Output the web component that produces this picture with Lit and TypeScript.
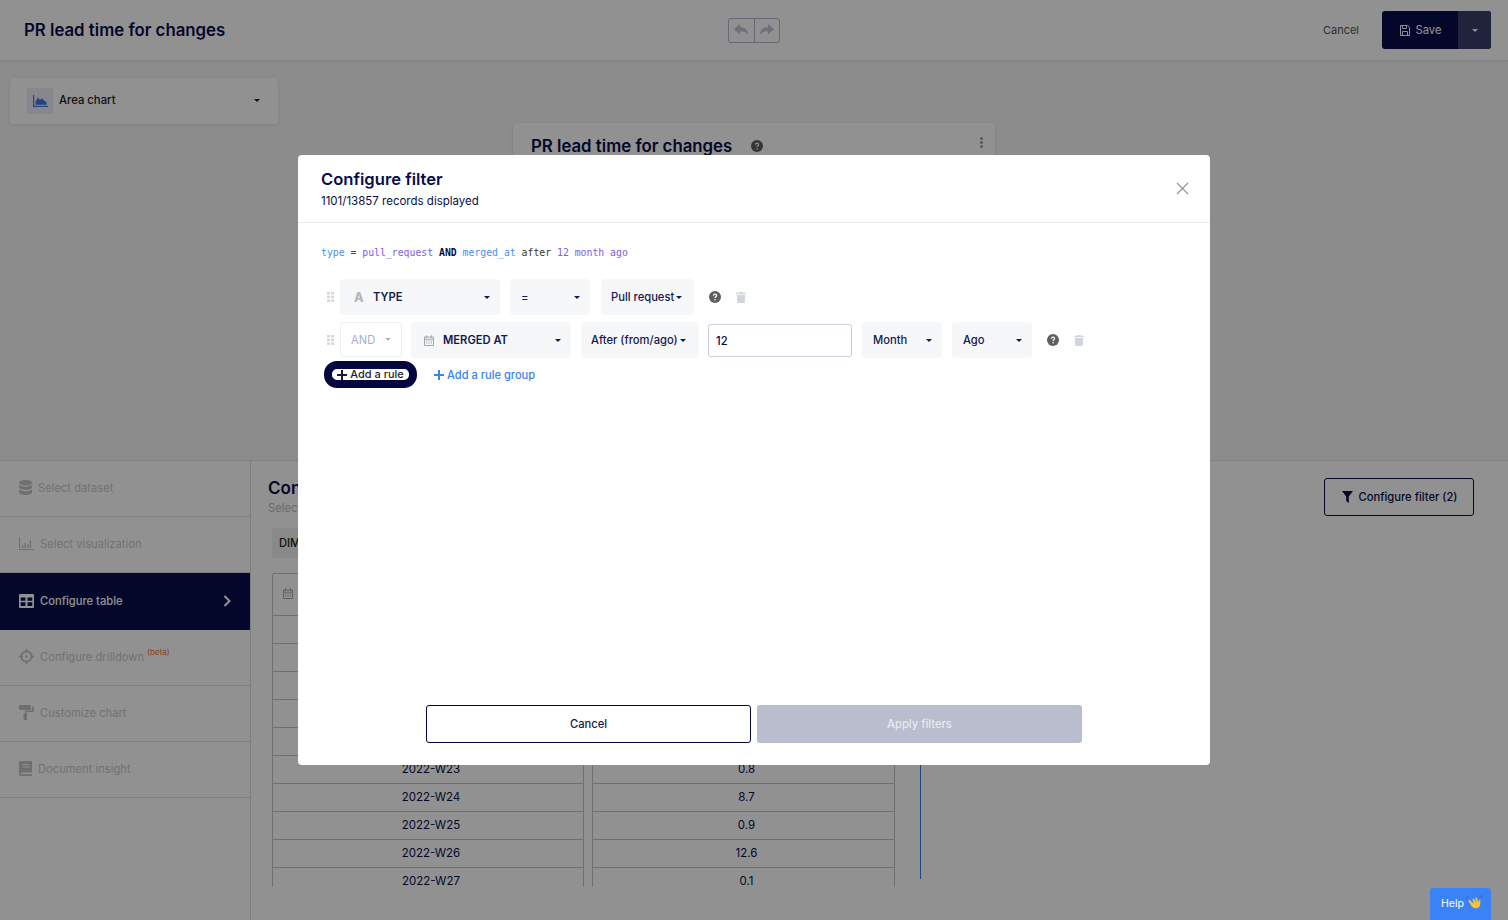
import { LitElement, html, css, svg } from "lit";
import { customElement } from "lit/decorators.js";

const caret = html`<i class="caret"></i>`;
const help = html`<svg class="help" viewBox="0 0 12 12"><circle cx="6" cy="6" r="6" fill="#5f5f5f"/><path d="M4.4 4.6c.1-.9.8-1.4 1.6-1.4.9 0 1.6.6 1.6 1.4 0 1.2-1.5 1.2-1.5 2.3" fill="none" stroke="#fff" stroke-width="1.2"/><circle cx="6.1" cy="8.8" r=".8" fill="#fff"/></svg>`;
const trash = html`<svg class="trash" viewBox="0 0 10 11"><path d="M3.4 0h3.2l.4.8H10v1.1H0V.8h3zM.7 2.7h8.6l-.6 8.3H1.3z" fill="#d1d5de"/></svg>`;
const grip = html`<svg class="grip" viewBox="0 0 7 10"><g fill="#d4d6da"><rect width="3" height="2.4"/><rect x="4" width="3" height="2.4"/><rect y="3.7" width="3" height="2.4"/><rect x="4" y="3.7" width="3" height="2.4"/><rect y="7.4" width="3" height="2.4"/><rect x="4" y="7.4" width="3" height="2.4"/></g></svg>`;
const cal = (c: string) => html`<svg class="cal" viewBox="0 0 10 11"><path d="M.5 2h9v8.500h-9zM.5 4.200h9" fill="none" stroke="${c}" stroke-width="1"/><path d="M2.500.3v2.500M7.500.3v2.500" stroke="${c}" stroke-width="1"/><path d="M2 5.600h1.200v1H2zM4.400 5.600h1.200v1H4.400zM6.800 5.600H8v1H6.800zM2 7.600h1.200v1H2zM4.400 7.600h1.200v1H4.400zM6.800 7.600H8v1H6.800z" fill="${c}"/></svg>`;

const icons: Record<string, { vb: string; body: unknown }> = {
  db: { vb: "0 0 14 14", body: svg`<path d="M7 0c3.900 0 7 1.100 7 2.500S10.900 5 7 5 0 3.900 0 2.500 3.100 0 7 0zM0 4.300C1.200 5.600 4 6.300 7 6.300s5.800-.7 7-2v2.500C14 8.100 10.900 9.300 7 9.300S0 8.100 0 6.800zM0 8.600c1.200 1.300 4 2 7 2s5.800-.7 7-2v2.900C14 12.900 10.900 14 7 14s-7-1.100-7-2.500z"/>` },
  bars: { vb: "0 0 15 15", body: svg`<path d="M0 1h1v12h14v1H0zM3 9h1.300v3H3zM5.600 7h1.300v5H5.600zM8.200 8.500h1.300V12H8.200zM10.800 4.500h1.300V12h-1.300z"/>` },
  table: { vb: "0 0 15 14", body: svg`<path fill-rule="evenodd" d="M1 0h13a1 1 0 0 1 1 1v12a1 1 0 0 1-1 1H1a1 1 0 0 1-1-1V1a1 1 0 0 1 1-1zm.7 3.500v3.300h4.800V3.500zm6.800 0v3.300h4.800V3.500zM1.700 8.200v3.800h4.800V8.200zm6.800 0v3.800h4.800V8.200z"/>` },
  target: { vb: "0 0 15 15", body: svg`<circle cx="7.500" cy="7.500" r="5.200" fill="none" stroke="#c4c4c4" stroke-width="1.800"/><circle cx="7.500" cy="7.500" r="1.300"/><path d="M6.700 0h1.600v3.500H6.700zM6.700 11.500h1.600V15H6.700zM0 6.700h3.500v1.600H0zM11.500 6.700H15v1.600h-3.500z"/>` },
  roller: { vb: "0 0 15 15", body: svg`<path d="M1 0h10a1 1 0 0 1 1 1v3a1 1 0 0 1-1 1H1a1 1 0 0 1-1-1V1a1 1 0 0 1 1-1zM13 1.500h.5a1.500 1.500 0 0 1 1.500 1.500v2.500A1.500 1.500 0 0 1 13.500 7H7.500v1.500h.5V14a1 1 0 0 1-1 1H5.500a1 1 0 0 1-1-1V8.500h1.500V6.500a1 1 0 0 1 1-1h6V3H13z"/>` },
  book: { vb: "0 0 13 15", body: svg`<path fill-rule="evenodd" d="M2 0h11v11.500H2.300a1 1 0 0 0 0 1.800H13V15H2a2 2 0 0 1-2-2V2a2 2 0 0 1 2-2zm1.500 3v1h7V3zm0 2.500v1h7v-1z"/>` },
};

const steps = [
  { icon: "db", label: "Select dataset", w: "narrow" },
  { icon: "bars", label: "Select visualization", w: "" },
  { icon: "table", label: "Configure table", w: "", active: true },
  { icon: "target", label: "Configure drilldown", w: "", beta: true },
  { icon: "roller", label: "Customize chart", w: "" },
  { icon: "book", label: "Document insight", w: "narrow" },
];

const rows: [string, string][] = [
  ["2022-W18", "3.2"], ["2022-W19", "1.4"], ["2022-W20", "6.1"], ["2022-W21", "2.3"], ["2022-W22", "4.5"],
  ["2022-W23", "0.8"], ["2022-W24", "8.7"], ["2022-W25", "0.9"], ["2022-W26", "12.6"], ["2022-W27", "0.1"],
];

@customElement("app-root")
export class AppRoot extends LitElement {
  static styles = css`
    :host { display: block; position: relative; width: 1508px; height: 920px; overflow: hidden; font-family: Inter, "Liberation Sans", sans-serif; font-size: 11.200px; color: #070e48; background: #fff; --navy: #070e48; }
    * { box-sizing: border-box; }
    .caret { display: inline-block; width: 0; height: 0; border: 3px solid transparent; border-top: 3.500px solid currentColor; border-bottom: 0; flex: none; }

    .topbar { height: 60px; display: flex; align-items: center; padding: 0 17px 0 24px; background: #fff; box-shadow: 0 1px 3px rgba(0,0,0,.1); position: relative; }
    .topbar h1 { flex: 1 1 0; margin: 0; font-size: 16.800px; font-weight: 600; line-height: 24px; }
    .history { display: flex; margin-right: 543px; border: 1px solid #b5b7d0; border-radius: 3px; height: 25px; }
    .history span { width: 25px; display: flex; align-items: center; justify-content: center; }
    .history span + span { border-left: 1px solid #b5b7d0; }
    .history svg { width: 14px; height: 12px; fill: #c2c4d4; }
    .cancel-top { color: #555; margin-right: 23px; font-size: 11px; }
    .save { display: flex; height: 38px; background: var(--navy); border-radius: 3px; color: #fff; overflow: hidden; }
    .save-main { width: 76px; display: flex; align-items: center; justify-content: center; gap: 6px; padding-left: 1px; }
    .save-main svg { width: 10px; height: 11px; }
    .save-drop { width: 33px; display: flex; align-items: center; justify-content: center; background: #3a3f6a; }

    .stage { height: 400px; background: #f4f7f4; padding: 18px 0 0 10px; display: flex; align-items: flex-start; overflow: hidden; }
    .chart-select { width: 268px; height: 46px; background: #fff; border-radius: 3px; box-shadow: 0 1px 3px rgba(0,0,0,.1); display: flex; align-items: center; padding: 0 18px 2px 17px; font-weight: 500; font-size: 11.300px; color: #1b1b22; }
    .chart-select .thumb { width: 26px; height: 26px; background: #eeeffa; display: flex; align-items: center; justify-content: center; margin: 2px 6px 0 0; }
    .chart-select .thumb svg { width: 15px; height: 12px; fill: #3f78e0; }
    .chart-select span { flex: 1; }
    .chart-card { margin: 45px 0 0 235px; width: 482px; height: 300px; background: #fff; border-radius: 3px; box-shadow: 0 1px 3px rgba(0,0,0,.1); padding: 12px 12px 0 18px; display: flex; align-items: flex-start; }
    .chart-card h2 { margin: 0 19px 0 0; font-size: 16.800px; font-weight: 600; line-height: 22px; }
    .chart-card .help { margin-top: 5px; }
    .chart-card .dots { margin-left: auto; display: grid; gap: 1px; margin-top: 2px; }
    .chart-card .dots i { width: 3px; height: 3px; border-radius: 50%; background: #9a9a9a; }

    .panel { height: 460px; display: flex; background: #fff; border-top: 1px solid #ddd; }
    .side { width: 251px; border-right: 1px solid #ddd; flex: none; }
    .step { height: 56px; display: flex; align-items: center; padding: 0 0 2px 19px; gap: 6px; color: #c9c9c9; font-size: 11.200px; border-bottom: 1px solid #e2e2e2; }
    .step svg { width: 15px; height: 15px; fill: #c4c4c4; flex: none; }
    .step.narrow svg { width: 13px; }
    .step.active { background: var(--navy); color: #fff; font-weight: 500; border-bottom: 0; height: 57px; padding-right: 19px; }
    .step.active svg { fill: #fff; height: 14px; }
    .step.active .chev { margin-left: auto; width: 8px; height: 12px; fill: none; stroke: #fff; stroke-width: 2; }
    .step sup { color: #f0732b; font-size: 8px; margin-left: 3px; line-height: 1; position: relative; top: -2px; vertical-align: top; }
    .main { flex: 1; min-width: 0; padding: 17px 34px 0 17px; display: flex; flex-direction: column; }
    .main-head { display: flex; justify-content: space-between; align-items: flex-start; height: 50px; }
    .main-head h3 { margin: 0; font-size: 17px; font-weight: 600; line-height: 20px; }
    .main-head p { margin: 2px 0 0; font-size: 11.200px; color: #bbb; line-height: 16px; }
    .filter-btn { width: 150px; height: 38px; border: 1px solid var(--navy); border-radius: 3px; display: flex; align-items: center; justify-content: center; gap: 6px; font-weight: 500; font-size: 11.200px; padding: 0 0 1px 1px; }
    .filter-btn svg { width: 11px; height: 12px; fill: var(--navy); }
    .tabs { margin-left: 4px; }
    .tab { display: inline-flex; align-items: center; width: 180px; height: 30px; padding: 0 0 1px 7px; background: #f1f1f1; border-radius: 3px; color: #222; font-weight: 500; font-size: 11.200px; }
    .tablewrap { margin: 15px 0 0 4px; height: 314px; display: flex; overflow: hidden; flex: none; }
    .col { border-left: 1px solid #c6c6c6; border-right: 1px solid #c6c6c6; }
    .col.a { width: 312px; margin-right: 8px; border-radius: 3px 0 0 0; }
    .col.b { width: 303px; }
    .cell { height: 28px; display: flex; align-items: center; justify-content: center; padding: 0 0 2px 6px; border-bottom: 1px solid #c6c6c6; font-size: 11.500px; }
    .cell.head { height: 43px; justify-content: flex-start; padding-left: 10px; border-top: 1px solid #c6c6c6; font-weight: 500; }
    .cell.head .cal { width: 10px; height: 11px; margin-right: 6px; }
    .axis { width: 1px; height: 306px; background: #3f78e0; margin-left: 25px; flex: none; }

    .overlay { position: absolute; inset: 0; background: rgba(0,0,0,.43); display: flex; align-items: center; justify-content: center; }
    .modal { width: 912px; height: 610px; background: #fff; border-radius: 4px; display: flex; flex-direction: column; }
    .m-head { height: 68px; flex: none; border-bottom: 1px solid #e9e9e9; padding: 13px 21px 0 23px; display: flex; justify-content: space-between; align-items: flex-start; }
    .m-head h2 { margin: 0; font-size: 16.600px; font-weight: 600; line-height: 22px; }
    .m-head p { margin: 3px 0 0; font-size: 11.500px; line-height: 16px; }
    .x { width: 13px; height: 13px; margin: 14px 0 0 0; stroke: #9a9a9a; stroke-width: 1.400; fill: none; }
    .m-body { flex: 1; padding: 23px 23px 22px; display: flex; flex-direction: column; min-height: 0; }
    .code { font-family: "DejaVu Sans Mono", monospace; font-size: 9.800px; line-height: 13px; margin-bottom: 20px; white-space: pre; }
    .code .f { color: #4b8df8; } .code .v { color: #7c5ce8; } .code .o { color: #444; } .code .k { font-weight: 700; color: #070e48; } .code .t { color: #333; }
    .rule { display: flex; align-items: center; height: 36px; }
    .rule + .rule { margin-top: 7px; }
    .grip { width: 7px; height: 10px; margin: 0 6px; flex: none; }
    .sel { height: 36px; background: #f6f7f9; border-radius: 4px; display: flex; align-items: center; justify-content: space-between; padding: 0 10px 0 11px; font-size: 11.200px; font-weight: 500; flex: none; color: #14194f; margin-right: 10px; white-space: nowrap; }
    .sel.group { justify-content: flex-start; padding: 0 10px 0 13px; font-weight: 600; }
    .sel.group .cal { width: 10px; height: 11px; margin-right: 9px; flex: none; }
    .sel.group .a-icon { font-size: 12.500px; font-weight: 800; color: #b8b8b8; width: 11px; margin: 0 8px 0 1px; }
    .sel.group .caret { margin-left: auto; }
    .sel.tight { justify-content: flex-start; gap: 2px; padding: 0 0 0 10px; }
    .w160 { width: 160px; } .w80 { width: 80px; } .w80.wide-gap { margin-right: 11px; } .w93 { width: 93px; margin-right: 15px; } .w118 { width: 118px; margin-right: 9px; } .last { margin-right: 15px; }
    .and { width: 62px; height: 35px; margin: -1px 9px 0 0; border: 1px solid #eceef2; border-radius: 3px; background: #fff; color: #a9aec2; font-weight: 400; flex: none; display: flex; align-items: center; justify-content: space-between; padding: 0 10px; font-size: 11.200px; }
    .and .caret { color: #b0b4c4; }
    .num { width: 144px; height: 33px; margin-right: 10px; border: 1px solid #c9cedb; border-radius: 3px; padding: 1px 7px 0; display: flex; align-items: center; font-size: 11.200px; font-weight: 500; flex: none; }
    .help { width: 12px; height: 12px; flex: none; }
    .trash { width: 10px; height: 11px; margin-left: 15px; flex: none; }
    .adders { display: flex; align-items: center; margin: 3px 0 0 3px; }
    .add-rule { height: 27px; border: 8px solid #04063f; border-radius: 13px; background: #fff; display: flex; align-items: center; justify-content: center; width: 93px; color: #1d1d2c; font-size: 11px; font-weight: 500; gap: 3px; line-height: 11px; }
    .add-rule svg, .add-group svg { width: 10px; height: 10px; flex: none; }
    .add-rule svg { stroke: #1d1d2c; } .add-group svg { stroke: #3b82f6; }
    .add-rule span, .add-group span { white-space: nowrap; }
    .add-group { margin-left: 17px; color: #3b82f6; font-size: 11.100px; font-weight: 500; display: flex; align-items: center; gap: 3px; }
    .m-foot { margin-top: auto; display: flex; justify-content: center; gap: 6px; }
    .m-foot div { width: 325px; height: 38px; border-radius: 3px; display: flex; align-items: center; justify-content: center; font-size: 11.200px; font-weight: 500; }
    .btn-cancel { border: 1px solid #04063f; color: #14194f; }
    .btn-apply { background: #b9bdcd; color: #e8e9ef; }
    .help-btn { position: absolute; right: 17px; bottom: 0; width: 61px; height: 32px; background: #3b82f6; border-radius: 3px 3px 0 0; color: #fff; font-size: 10.500px; font-weight: 400; display: flex; align-items: center; justify-content: center; gap: 2px; padding: 0 0 2px 2px; }
    .help-btn svg { width: 16px; height: 16px; }
  `;

  render() {
    return html`
      <header class="topbar">
        <h1>PR lead time for changes</h1>
        <div class="history">
          <span><svg viewBox="0 0 14 12"><path d="M6 0v3.200c4.500 0 8 1.800 8 8.300C12.500 8 10 7.300 6 7.300v3.200L0 5.200z"/></svg></span>
          <span><svg viewBox="0 0 14 12"><path d="M8 0v3.200c-4.500 0-8 1.800-8 8.300C1.500 8 4 7.300 8 7.300v3.200l6-5.300z"/></svg></span>
        </div>
        <span class="cancel-top">Cancel</span>
        <div class="save">
          <div class="save-main">
            <svg viewBox="0 0 10 11"><path d="M.5.500h7l2 2v8h-9zM2.500.500v3h4v-3M2.500 10.500v-4h5v4" fill="none" stroke="#fff" stroke-width="1"/></svg>
            <span>Save</span>
          </div>
          <div class="save-drop">${caret}</div>
        </div>
      </header>

      <section class="stage">
        <div class="chart-select">
          <div class="thumb"><svg viewBox="0 0 15 12"><path d="M0 0h1.200v10.800H15V12H0zM2.500 9.800V6.500L5 2.500l2 2.500 2-1.800 2.500 2.800 2 1v2.800z"/></svg></div>
          <span>Area chart</span>
          ${caret}
        </div>
        <div class="chart-card">
          <h2>PR lead time for changes</h2>
          ${help}
          <div class="dots"><i></i><i></i><i></i></div>
        </div>
      </section>

      <section class="panel">
        <nav class="side">
          ${steps.map((s) => html`
            <div class="step ${s.w} ${s.active ? "active" : ""}">
              <svg viewBox="${icons[s.icon].vb}" preserveAspectRatio="none">${icons[s.icon].body}</svg>
              <span>${s.label}${s.beta ? html`<sup>(beta)</sup>` : ""}</span>
              ${s.active ? html`<svg class="chev" viewBox="0 0 8 12"><path d="M1.500 1l5 5-5 5"/></svg>` : ""}
            </div>`)}
        </nav>
        <div class="main">
          <div class="main-head">
            <div>
              <h3>Configure table</h3>
              <p>Select dimensions and metrics</p>
            </div>
            <div class="filter-btn">
              <svg viewBox="0 0 11 12"><path d="M0 0h11L6.800 5.500V12L4.200 10V5.500z"/></svg>
              <span>Configure filter (2)</span>
            </div>
          </div>
          <div class="tabs"><span class="tab">DIMENSIONS</span></div>
          <div class="tablewrap">
            <div class="col a">
              <div class="cell head">${cal("#aaa")}<span>Week</span></div>
              ${rows.map((r) => html`<div class="cell">${r[0]}</div>`)}
            </div>
            <div class="col b">
              <div class="cell head"><span>Lead time</span></div>
              ${rows.map((r) => html`<div class="cell">${r[1]}</div>`)}
            </div>
            <div class="axis"></div>
          </div>
        </div>
      </section>

      <div class="overlay">
        <div class="modal">
          <div class="m-head">
            <div>
              <h2>Configure filter</h2>
              <p>1101/13857 records displayed</p>
            </div>
            <svg class="x" viewBox="0 0 13 13"><path d="M1 1l11 11M12 1L1 12"/></svg>
          </div>
          <div class="m-body">
            <div class="code"><span class="f">type</span> <span class="o">=</span> <span class="v">pull_request</span> <span class="k">AND</span> <span class="f">merged_at</span> <span class="t">after</span> <span class="v">12 month ago</span></div>
            <div class="rule">
              ${grip}
              <div class="sel group w160"><span class="a-icon">A</span><span>TYPE</span>${caret}</div>
              <div class="sel w80 wide-gap"><span>=</span>${caret}</div>
              <div class="sel tight w93"><span>Pull request</span>${caret}</div>
              ${help}${trash}
            </div>
            <div class="rule">
              ${grip}
              <div class="and"><span>AND</span>${caret}</div>
              <div class="sel group w160">${cal("#a5a5a5")}<span>MERGED AT</span>${caret}</div>
              <div class="sel tight w118"><span>After (from/ago)</span>${caret}</div>
              <div class="num">12</div>
              <div class="sel w80"><span>Month</span>${caret}</div>
              <div class="sel w80 last"><span>Ago</span>${caret}</div>
              ${help}${trash}
            </div>
            <div class="adders">
              <div class="add-rule"><svg viewBox="0 0 10 10"><path d="M5 0v10M0 5h10" stroke-width="2"/></svg><span>Add a rule</span></div>
              <div class="add-group"><svg viewBox="0 0 10 10"><path d="M5 0v10M0 5h10" stroke-width="2"/></svg><span>Add a rule group</span></div>
            </div>
            <div class="m-foot">
              <div class="btn-cancel">Cancel</div>
              <div class="btn-apply">Apply filters</div>
            </div>
          </div>
        </div>
      </div>

      <div class="help-btn">
        <span>Help</span>
        <svg viewBox="0 0 12 12"><path d="M2.500 3.500l3.300 3-1-3.400 1.100-.4 1.500 3-.4-3.600 1.200-.2.900 3.700.6-2 1.100.3-.2 3.400c-.2 1.900-2 3.100-4 2.600-1.200-.3-1.900-1-2.600-1.900L1.700 4.300z" fill="#f7c23c"/><path d="M0 4c.3-1.500 1-2.500 2-3M10 0c.8.3 1.500 1 1.800 2" fill="none" stroke="#2f6bd0" stroke-width=".8"/></svg>
      </div>
    `;
  }
}
